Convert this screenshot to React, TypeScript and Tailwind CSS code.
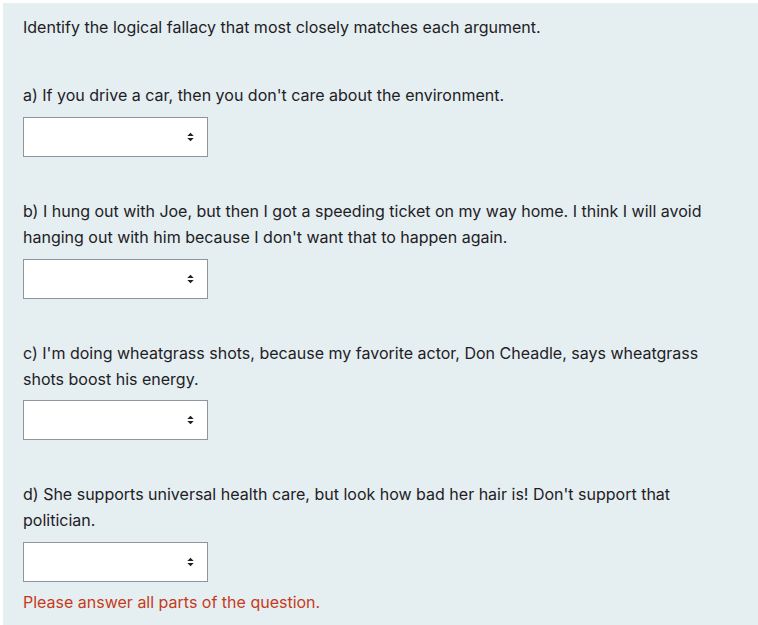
import React from 'react';

const questions = [
  { id: 'a', gap: 'mt-[9px]', text: "a) If you drive a car, then you don't care about the environment." },
  {
    id: 'b',
    gap: 'mt-[9px]',
    text: "b) I hung out with Joe, but then I got a speeding ticket on my way home. I think I will avoid hanging out with him because I don't want that to happen again.",
  },
  {
    id: 'c',
    gap: 'mt-[8px]',
    text: "c) I'm doing wheatgrass shots, because my favorite actor, Don Cheadle, says wheatgrass shots boost his energy.",
  },
  {
    id: 'd',
    gap: 'mt-[9px]',
    text: "d) She supports universal health care, but look how bad her hair is! Don't support that politician.",
  },
];

function SelectBox({ className }: { className: string }) {
  return (
    <div className={`${className} flex h-[40px] w-[185px] items-center justify-end border border-[#8f959e] bg-white pr-[13px]`}>
      <svg width="7" height="10" viewBox="0 0 7 10" className="text-[#1d2125]">
        <path d="M0.3 4.1 L3.5 0.7 L6.7 4.1 Z" fill="currentColor" />
        <path d="M0.3 5.9 L3.5 9.3 L6.7 5.9 Z" fill="currentColor" />
      </svg>
    </div>
  );
}

export default function App() {
  return (
    <div className="min-h-[625px] bg-white pl-[3px] pt-[3px] font-['Inter',sans-serif] text-[16px] leading-[26px] text-[#1d2125]">
      <div className="min-h-[622px] bg-[#e5eef1] px-[20px] pt-[11px] pb-[10px]">
        <p>Identify the logical fallacy that most closely matches each argument.</p>
        <div className="mt-[42px] flex flex-col gap-[41px]">
          {questions.map((q) => (
            <div key={q.id}>
              <p>{q.text}</p>
              <SelectBox className={q.gap} />
            </div>
          ))}
        </div>
        <p className="mt-[7px] text-[#c63a20]">Please answer all parts of the question.</p>
      </div>
    </div>
  );
}
